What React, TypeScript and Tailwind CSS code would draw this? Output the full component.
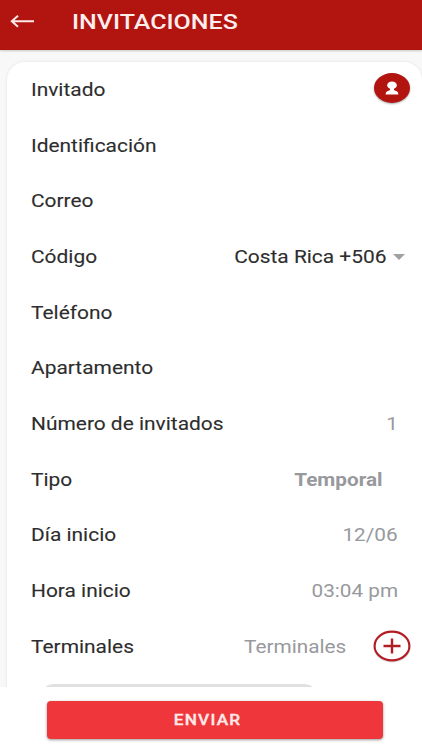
import React from "react";

type RowProps = { label: string; children?: React.ReactNode };

function Row({ label, children }: RowProps) {
  return (
    <div className="flex h-[55.7px] items-center justify-between">
      <span className="inline-block origin-left scale-x-[1.195] whitespace-nowrap text-[#2d2d2d] [-webkit-text-stroke:0.1px_#2d2d2d]">{label}</span>
      {children}
    </div>
  );
}

function Value({ children }: { children: React.ReactNode }) {
  return (
    <span className="inline-block origin-right scale-x-[1.185] whitespace-nowrap text-[#97999d]">{children}</span>
  );
}

export default function App() {
  return (
    <div className="flex h-[750px] w-[422px] flex-col overflow-hidden bg-white font-['Roboto',sans-serif] text-[17.5px] leading-6">
      <header className="relative z-10 flex h-[50px] shrink-0 items-start bg-[#b21410] shadow-[0_1px_2px_rgba(0,0,0,0.2)]">
        <svg className="ml-[10px] mt-[14px] h-[14px] w-[25px]" viewBox="0 0 25 14" fill="none" stroke="#fbe9e8" strokeWidth="2">
          <path d="M24 7.3H2M8 1.8L1.8 7.3L8 12.8" />
        </svg>
        <h1 className="ml-[36.5px] mt-[10px] origin-left scale-x-[1.25] whitespace-nowrap text-[20px] font-medium text-[#fdeeee]">
          INVITACIONES
        </h1>
      </header>

      <main className="h-[637px] shrink-0 overflow-hidden bg-[#f8f8f8] pl-[7px] pt-[11.5px]">
        <section className="h-[700px] rounded-t-[18px] bg-white pl-[24px] pr-[24px] pt-[0.5px] shadow-[0_0_3px_rgba(0,0,0,0.1)]">
          <Row label="Invitado">
            <button aria-label="Contacto" className="-mr-[12px] -mt-[3px] flex h-[30px] w-[36px] items-center justify-center rounded-[50%] bg-[#b21410] shadow-[0_1px_2px_rgba(0,0,0,0.35)]">
              <svg className="h-[14px] w-[14px]" viewBox="0 0 14 14" fill="#fff">
                <ellipse cx="7" cy="4.3" rx="4.8" ry="3.9" />
                <path d="M5 7H9V9.2C11.5 9.6 13.4 10.8 13.4 13.6H.6C.6 10.8 2.5 9.6 5 9.2Z" />
              </svg>
            </button>
          </Row>
          <Row label="Identificación" />
          <Row label="Correo" />
          <Row label="Código">
            <div className="-mr-[6.5px] flex items-center gap-[6px]">
              <span className="inline-block origin-right scale-x-[1.195] whitespace-nowrap text-[#2d2d2d] [-webkit-text-stroke:0.1px_#2d2d2d]">Costa Rica +506</span>
              <svg className="h-[6px] w-[12px]" viewBox="0 0 12 6" fill="#a0a0a0">
                <path d="M0 0H12L6 6Z" />
              </svg>
            </div>
          </Row>
          <Row label="Teléfono" />
          <Row label="Apartamento" />
          <Row label="Número de invitados">
            <Value>1</Value>
          </Row>
          <Row label="Tipo">
            <div className="mr-[15px] font-bold">
              <Value>Temporal</Value>
            </div>
          </Row>
          <Row label="Día inicio">
            <Value>12/06</Value>
          </Row>
          <Row label="Hora inicio">
            <Value>03:04 pm</Value>
          </Row>
          <Row label="Terminales">
            <div className="-mr-[13px] flex items-center gap-[27px]">
              <Value>Terminales</Value>
              <svg className="h-[33px] w-[38px]" viewBox="0 0 38 33" fill="none" stroke="#b21d24">
                <ellipse cx="19" cy="17.2" rx="17.6" ry="14.4" stroke="#000" strokeOpacity=".1" strokeWidth="2" />
                <ellipse cx="19" cy="16" rx="17.4" ry="14.4" strokeWidth="2.1" fill="#fff" />
                <path d="M10.5 16H27.5M19 8.6V23.6" strokeWidth="2.4" />
              </svg>
            </div>
          </Row>
          <div className="ml-[8px] mt-[9px] h-[30px] w-[280px] rounded-[18px] bg-[#e0e0e0]" />
        </section>
      </main>

      <footer className="flex flex-1 justify-center pt-[14px]">
        <button className="ml-[8px] h-[38px] w-[336px] rounded-[4px] bg-[#ee363b] pr-[14px] text-[14px] font-medium text-[#ffe9e9] shadow-[0_1px_3px_rgba(0,0,0,0.4)] [-webkit-text-stroke:0.3px_#ffe9e9]">
          <span className="inline-block scale-x-[1.23] tracking-[1px]">ENVIAR</span>
        </button>
      </footer>
    </div>
  );
}
